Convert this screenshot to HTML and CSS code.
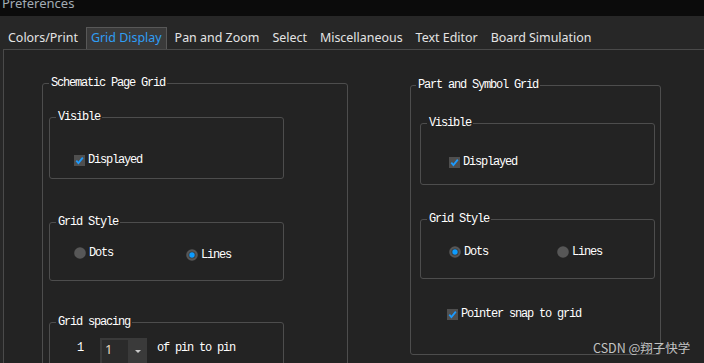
FILE: index.html
```html
<!DOCTYPE html>
<html>
<head>
<meta charset="utf-8">
<link rel="stylesheet" href="styles.css">
</head>
<body>
<div class="titlebar"><span class="title-text">Preferences</span></div>
<div class="tabs">
  <div class="tab">Colors/Print</div>
  <div class="tab active">Grid Display</div>
  <div class="tab">Pan and Zoom</div>
  <div class="tab">Select</div>
  <div class="tab">Miscellaneous</div>
  <div class="tab">Text Editor</div>
  <div class="tab">Board Simulation</div>
</div>
<div class="panel">
  <fieldset class="group outer-left">
    <legend>Schematic Page Grid</legend>
    <fieldset class="group vis-left">
      <legend>Visible</legend>
      <div class="pad-vis-left">
        <div class="opt">
          <svg class="box" width="11" height="11" viewBox="0 0 11 11"><rect width="11" height="11" fill="#4f4f4f"/><path d="M2.3 5.6 L4.4 8 L8.8 2.6" fill="none" stroke="#1c9bff" stroke-width="1.8"/></svg>
          <span>Displayed</span>
        </div>
      </div>
    </fieldset>
    <fieldset class="group style-left">
      <legend>Grid Style</legend>
      <div class="radios pad-style-left">
        <div class="opt w112">
          <svg class="box" width="12" height="12" viewBox="0 0 12 12"><circle cx="6" cy="6" r="5.8" fill="#575757"/></svg>
          <span>Dots</span>
        </div>
        <div class="opt lower">
          <svg class="box" width="12" height="12" viewBox="0 0 12 12"><circle cx="6" cy="6" r="5.8" fill="#575757"/><circle cx="6" cy="6" r="3.6" fill="#3a3a3a"/><circle cx="6" cy="6" r="2.7" fill="#0d9cff"/></svg>
          <span>Lines</span>
        </div>
      </div>
    </fieldset>
    <fieldset class="group spacing-left">
      <legend>Grid spacing</legend>
      <div class="spacing-row pad-spacing">
        <span class="frac">1</span>
        <div class="spin">
          <div class="spin-edit">1</div>
          <div class="spin-btn"><span class="tri"></span></div>
        </div>
        <span class="spacing-text">of pin to pin</span>
      </div>
    </fieldset>
  </fieldset>
  <fieldset class="group outer-right">
    <legend>Part and Symbol Grid</legend>
    <fieldset class="group vis-right">
      <legend>Visible</legend>
      <div class="pad-vis-right">
        <div class="opt">
          <svg class="box" width="11" height="11" viewBox="0 0 11 11"><rect width="11" height="11" fill="#4f4f4f"/><path d="M2.3 5.6 L4.4 8 L8.8 2.6" fill="none" stroke="#1c9bff" stroke-width="1.8"/></svg>
          <span>Displayed</span>
        </div>
      </div>
    </fieldset>
    <fieldset class="group style-right">
      <legend>Grid Style</legend>
      <div class="radios pad-style-right">
        <div class="opt w108">
          <svg class="box" width="12" height="12" viewBox="0 0 12 12"><circle cx="6" cy="6" r="5.8" fill="#575757"/><circle cx="6" cy="6" r="3.6" fill="#3a3a3a"/><circle cx="6" cy="6" r="2.7" fill="#0d9cff"/></svg>
          <span>Dots</span>
        </div>
        <div class="opt">
          <svg class="box" width="12" height="12" viewBox="0 0 12 12"><circle cx="6" cy="6" r="5.8" fill="#575757"/></svg>
          <span>Lines</span>
        </div>
      </div>
    </fieldset>
    <div class="opt snap">
      <svg class="box" width="11" height="11" viewBox="0 0 11 11"><rect width="11" height="11" fill="#4f4f4f"/><path d="M2.3 5.6 L4.4 8 L8.8 2.6" fill="none" stroke="#1c9bff" stroke-width="1.8"/></svg>
      <span>Pointer snap to grid</span>
    </div>
  </fieldset>
</div>
<div class="watermark">CSDN @翔子快学</div>
</body>
</html>
```
FILE: styles.css
```css
html, body {
  margin: 0;
  padding: 0;
}
body {
  width: 704px;
  height: 363px;
  overflow: hidden;
  background: #272727;
  position: relative;
  font-family: "Liberation Mono", monospace;
  color: #eeeeee;
}
.titlebar {
  height: 16px;
  background: #0b0b0b;
  overflow: hidden;
  padding-left: 2px;
}
.title-text {
  display: block;
  margin-top: -5px;
  font: 13px/16px "Noto Sans", sans-serif;
  color: #a2abb4;
}
.tabs {
  display: flex;
  align-items: flex-end;
  height: 33px;
  padding-left: 3px;
  gap: 3px;
}
.tab {
  box-sizing: border-box;
  height: 22px;
  padding: 0 4px;
  border: 1px solid transparent;
  border-bottom: none;
  font: 12.45px/20px "Noto Sans", sans-serif;
  color: #e4e4e4;
  white-space: nowrap;
}
.tab.active {
  background: #3a3a3a;
  border-color: #585858;
  color: #2f9ef5;
}
.panel {
  margin-left: 3px;
  height: 320px;
  border-left: 1px solid #4a4a4a;
  border-top: 1px solid #4a4a4a;
  background: #232323;
  display: flex;
  align-items: flex-start;
}
.group {
  margin: 0;
  padding: 0;
  border: 1px solid #4d4d4d;
  border-radius: 3px;
  box-sizing: border-box;
  min-width: 0;
}
legend {
  padding: 0 2px;
  margin-left: 6px;
  font-size: 12px;
  line-height: 12px;
  letter-spacing: -1.2px;
  color: #ffffff;
}
.outer-left {
  margin: 27px 0 0 38px;
  width: 306px;
  height: 330px;
  flex: none;
}
.outer-right {
  margin: 29px 0 0 62px;
  width: 251px;
  height: 276px;
  flex: none;
}
.outer-right > legend {
  margin-left: 5px;
}
.vis-left {
  margin: 22px 0 0 6px;
  width: 235px;
  height: 68px;
}
.style-left {
  margin: 37px 0 0 6px;
  width: 235px;
  height: 65px;
}
.spacing-left {
  margin: 35px 0 0 6px;
  width: 235px;
  height: 100px;
}
.vis-right {
  margin: 26px 0 0 9px;
  width: 235px;
  height: 68px;
}
.style-right {
  margin: 28px 0 0 9px;
  width: 235px;
  height: 66px;
}
.pad-vis-left { padding: 30px 0 0 24px; }
.pad-style-left { padding: 18px 0 0 24px; }
.pad-spacing { padding: 10px 0 0 27px; }
.pad-vis-right { padding: 26px 0 0 28px; }
.pad-style-right { padding: 20px 0 0 28px; }
.opt {
  display: flex;
  align-items: center;
  height: 14px;
  font-size: 12px;
  line-height: 14px;
  letter-spacing: -1.2px;
  color: #ffffff;
  white-space: nowrap;
}
.opt .box {
  flex: none;
  margin-right: 3px;
}
.radios {
  display: flex;
  align-items: flex-start;
}
.w112 { width: 112px; }
.w108 { width: 108px; }
.lower { margin-top: 2px; }
.snap {
  margin: 28px 0 0 36px;
}
.spacing-row {
  display: flex;
  align-items: flex-start;
  font-size: 12px;
  letter-spacing: -1.2px;
  color: #ffffff;
}
.frac {
  width: 23px;
  line-height: 20px;
}
.spin {
  display: flex;
  width: 47px;
  height: 28px;
  box-sizing: border-box;
  padding: 2px 0 0 2px;
  background: #3a3a3a;
  margin-right: 10px;
}
.spin-edit {
  width: 26px;
  background: #2b2b2b;
  font: 13px/18px "Noto Sans", sans-serif;
  letter-spacing: 0;
  color: #e8d8c0;
  padding-left: 3px;
  box-sizing: border-box;
}
.spin-btn {
  flex: 1;
  display: flex;
  justify-content: center;
  padding-top: 10px;
}
.tri {
  width: 0;
  height: 0;
  border-left: 3px solid transparent;
  border-right: 3px solid transparent;
  border-top: 3px solid #c8c8c8;
}
.spacing-text {
  line-height: 20px;
}
.watermark {
  position: absolute;
  left: 593px;
  top: 339px;
  font: 12.5px/18px "Noto Sans CJK SC", "Noto Sans", sans-serif;
  color: rgba(225, 225, 225, 0.85);
  white-space: nowrap;
}
```
